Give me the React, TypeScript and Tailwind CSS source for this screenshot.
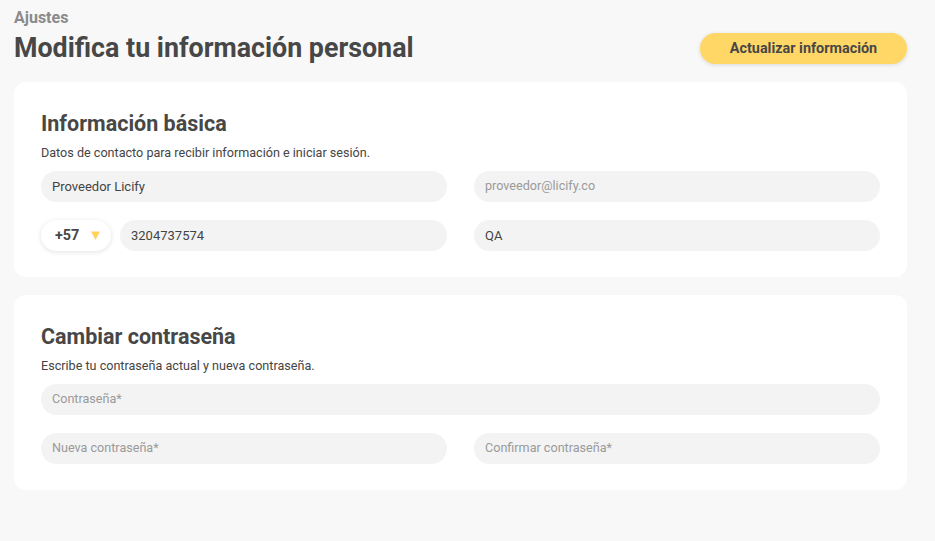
import React from "react";

const font = { fontFamily: "Roboto, 'Liberation Sans', sans-serif" };

function Field({ value, placeholder, className = "" }: { value?: string; placeholder?: string; className?: string }) {
  return (
    <div className={`h-[31px] rounded-full bg-[#f3f3f3] flex items-center pl-[11px] ${className}`}>
      {value ? (
        <span className="text-[13px] text-[#444]">{value}</span>
      ) : (
        <span className="text-[12.6px] text-[#9a9a9a]">{placeholder}</span>
      )}
    </div>
  );
}

function Card({ title, subtitle, children }: { title: string; subtitle: string; children: React.ReactNode }) {
  return (
    <section className="bg-white rounded-[12px] px-[27px] pt-[28px] pb-[26px]">
      <h2 className="text-[21.5px] leading-[28px] font-bold text-[#474747]">{title}</h2>
      <p className="mt-[7px] text-[12.6px] leading-[16px] text-[#444]">{subtitle}</p>
      <div className="mt-[10px] flex flex-col gap-[18px]">{children}</div>
    </section>
  );
}

export default function App() {
  return (
    <main className="min-h-screen bg-[#f8f8f8] pl-[14px] pr-[28px] pt-[8px] pb-[40px] text-[#474747]" style={font}>
      <div className="flex items-end justify-between">
        <div>
          <div className="text-[16px] leading-[20px] font-bold text-[#8a8a8a]">Ajustes</div>
          <h1 className="mt-[4px] text-[26.8px] leading-[32px] font-bold text-[#474747]">Modifica tu información personal</h1>
        </div>
        <button className="w-[207px] h-[31px] rounded-full bg-[#ffd766] text-[14.4px] font-bold text-[#474747] shadow-[0_1px_4px_rgba(0,0,0,0.12)]">
          Actualizar información
        </button>
      </div>

      <div className="mt-[18px] flex flex-col gap-[18px]">
        <Card title="Información básica" subtitle="Datos de contacto para recibir información e iniciar sesión.">
          <div className="grid grid-cols-2 gap-[27px]">
            <Field value="Proveedor Licify" />
            <Field placeholder="proveedor@licify.co" />
          </div>
          <div className="grid grid-cols-2 gap-[27px]">
            <div className="flex gap-[9px]">
              <div className="w-[70px] h-[31px] rounded-full bg-white shadow-[0_1px_5px_rgba(0,0,0,0.12)] flex items-center pl-[14px] gap-[12px]">
                <span className="text-[14.4px] font-bold text-[#474747]">+57</span>
                <svg width="9" height="9" viewBox="0 0 9 9">
                  <path d="M0 0.5 H9 L4.5 9 Z" fill="#ffd35c" />
                </svg>
              </div>
              <Field value="3204737574" className="flex-1" />
            </div>
            <Field value="QA" />
          </div>
        </Card>

        <Card title="Cambiar contraseña" subtitle="Escribe tu contraseña actual y nueva contraseña.">
          <Field placeholder="Contraseña*" />
          <div className="grid grid-cols-2 gap-[27px]">
            <Field placeholder="Nueva contraseña*" />
            <Field placeholder="Confirmar contraseña*" />
          </div>
        </Card>
      </div>
    </main>
  );
}
